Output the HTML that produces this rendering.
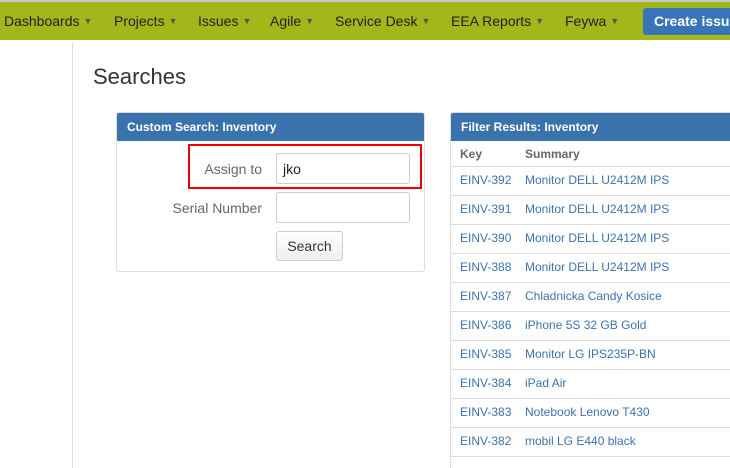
<!DOCTYPE html>
<html><head><style>
html,body{margin:0;width:730px;height:468px;overflow:hidden}
body{background:#fff;font-family:"Liberation Sans",Arial,sans-serif;position:relative}
.top{position:absolute;left:0;top:0;width:730px;height:2px;background:#c8c8c8}
.nav{position:absolute;left:0;top:2px;width:730px;height:38px;background:#a1b71a}
.nav span{position:absolute;top:11px;font-size:14px;color:#222}
.nav span i{font-style:normal;font-size:9px;color:#555;margin-left:4px;position:relative;top:-2px}
.btn{position:absolute;left:643px;top:6px;width:87px;height:27px;background:#3874b8;border-radius:3px 0 0 3px;color:#fff;font-weight:bold;font-size:14px;line-height:27px;padding-left:11px;box-sizing:border-box;overflow:hidden;white-space:nowrap}
.vl{position:absolute;left:72px;top:42px;width:1px;height:426px;background:#ddd}
h1{position:absolute;left:93px;top:64px;margin:0;font-weight:normal;font-size:22px;color:#333}
.panel{position:absolute;border:1px solid #ddd;border-radius:3px;overflow:hidden;box-sizing:border-box}
.ph{background:#3a73ac;color:#fff;font-weight:bold;font-size:12px;height:28px;line-height:28px;padding-left:10px}
.lbl{position:absolute;font-size:14px;color:#666;text-align:right;width:150px}
.inp{position:absolute;left:159px;width:134px;height:31px;border:1px solid #ccc;border-radius:3px;box-sizing:border-box;font-size:14px;color:#222;padding:7px 0 0 6px}
.sb{position:absolute;left:159px;top:118px;width:67px;height:30px;border:1px solid #ccc;border-radius:3px;box-sizing:border-box;background:linear-gradient(#fff,#eee);font-size:14px;color:#333;text-align:center;line-height:28px}
.red{position:absolute;left:188px;top:144px;width:234px;height:45px;border:2px solid #e00;box-sizing:border-box}
.row{position:absolute;left:0;width:279px;height:29px;border-top:1px solid #ddd;font-size:12px;color:#3b73af}
.row b{font-weight:normal;position:absolute;left:9px;top:6px}
.row em{font-style:normal;position:absolute;left:74px;top:6px}
</style></head><body>
<div class="top"></div>
<div class="nav">
<span style="left:4px">Dashboards<i>▼</i></span>
<span style="left:114px">Projects<i>▼</i></span>
<span style="left:198px">Issues<i>▼</i></span>
<span style="left:270px">Agile<i>▼</i></span>
<span style="left:335px">Service Desk<i>▼</i></span>
<span style="left:451px">EEA Reports<i>▼</i></span>
<span style="left:565px">Feywa<i>▼</i></span>
<div class="btn">Create issue</div>
</div>
<div class="vl"></div>
<h1>Searches</h1>
<div class="panel" style="left:116px;top:112px;width:309px;height:160px">
<div class="ph">Custom Search: Inventory</div>
<div class="lbl" style="left:-5px;top:48px">Assign to</div>
<div class="inp" style="top:40px">jko</div>
<div class="lbl" style="left:-5px;top:87px">Serial Number</div>
<div class="inp" style="top:79px"></div>
<div class="sb">Search</div>
</div>
<div class="red"></div>
<div class="panel" style="left:450px;top:112px;width:280px;height:356px;border-right:none;border-bottom:none;border-radius:3px 0 0 0">
<div class="ph">Filter Results: Inventory</div>
<div style="position:absolute;left:9px;top:34px;font-size:12px;font-weight:bold;color:#666">Key</div>
<div style="position:absolute;left:74px;top:34px;font-size:12px;font-weight:bold;color:#666">Summary</div>
<div class="row" style="top:53px"><b>EINV-392</b><em>Monitor DELL U2412M IPS</em></div>
<div class="row" style="top:82px"><b>EINV-391</b><em>Monitor DELL U2412M IPS</em></div>
<div class="row" style="top:111px"><b>EINV-390</b><em>Monitor DELL U2412M IPS</em></div>
<div class="row" style="top:140px"><b>EINV-388</b><em>Monitor DELL U2412M IPS</em></div>
<div class="row" style="top:169px"><b>EINV-387</b><em>Chladnicka Candy Kosice</em></div>
<div class="row" style="top:198px"><b>EINV-386</b><em>iPhone 5S 32 GB Gold</em></div>
<div class="row" style="top:227px"><b>EINV-385</b><em>Monitor LG IPS235P-BN</em></div>
<div class="row" style="top:256px"><b>EINV-384</b><em>iPad Air</em></div>
<div class="row" style="top:285px"><b>EINV-383</b><em>Notebook Lenovo T430</em></div>
<div class="row" style="top:314px"><b>EINV-382</b><em>mobil LG E440 black</em></div>
<div class="row" style="top:343px;height:10px"></div>
</div>
</body></html>
